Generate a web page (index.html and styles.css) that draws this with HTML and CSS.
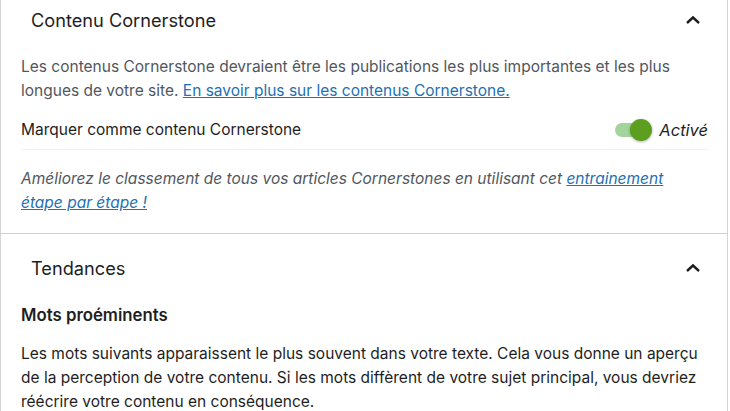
FILE: index.html
```html
<!DOCTYPE html>
<html lang="fr">
<head>
  <meta charset="UTF-8" />
  <title>Cornerstone</title>
  <link rel="stylesheet" href="styles.css">
</head>
<body>
  <div class="panel">
    <section class="box">
      <div class="box-head">
        <h2>Contenu Cornerstone</h2>
        <svg class="chevron" width="16" height="10" viewBox="0 0 16 10"><polyline points="2,8 8,2.5 14,8" fill="none" stroke="#1e1e1e" stroke-width="2.4"/></svg>
      </div>
      <div class="box-body">
        <p class="desc">Les contenus Cornerstone devraient être les publications les plus importantes et les plus longues de votre site. <a href="#">En savoir plus sur les contenus Cornerstone.</a></p>
        <div class="toggle-row">
          <span class="toggle-label">Marquer comme contenu Cornerstone</span>
          <span class="toggle">
            <span class="track"><span class="knob"></span></span>
            <em>Activé</em>
          </span>
        </div>
        <p class="hint">Améliorez le classement de tous vos articles Cornerstones en utilisant cet <a href="#">entrainement étape par étape !</a></p>
      </div>
    </section>

    <section class="box">
      <div class="box-head">
        <h2>Tendances</h2>
        <svg class="chevron" width="16" height="10" viewBox="0 0 16 10"><polyline points="2,8 8,2.5 14,8" fill="none" stroke="#1e1e1e" stroke-width="2.4"/></svg>
      </div>
      <div class="box-body">
        <h3>Mots proéminents</h3>
        <p class="desc dark">Les mots suivants apparaissent le plus souvent dans votre texte. Cela vous donne un aperçu de la perception de votre contenu. Si les mots diffèrent de votre sujet principal, vous devriez réécrire votre contenu en conséquence.</p>
      </div>
    </section>
  </div>
</body>
</html>
```

FILE: styles.css
```css
* {
  box-sizing: border-box;
}

body {
  margin: 0;
  background: #fff;
  font-family: Inter, "Noto Sans", sans-serif;
  font-size: 15.5px;
  line-height: 24px;
  color: #1e1e1e;
  overflow: hidden;
}

.panel {
  width: 728px;
  margin-top: -14px;
  border-left: 1px solid #d4d4d4;
  border-right: 1px solid #d4d4d4;
}

.box {
  border-bottom: 1px solid #d0d0d0;
}

.box-head {
  height: 68px;
  display: flex;
  align-items: center;
  justify-content: space-between;
  padding: 0 26px 0 30px;
}

.box-head h2 {
  margin: 0;
  font-size: 18.2px;
  font-weight: 400;
  color: #1e1e1e;
}

.box-body {
  padding: 1px 19px 18px 20px;
}

.desc {
  margin: 0;
  color: #50575e;
}

.desc.dark {
  color: #1e1e1e;
  margin-top: 15px;
}

a {
  color: #2271b1;
  text-decoration: underline;
}

.toggle-row {
  margin-top: 7px;
  height: 40px;
  display: flex;
  align-items: center;
  justify-content: space-between;
  border-bottom: 1px solid #f0f0f0;
}

.toggle {
  display: flex;
  align-items: center;
  gap: 8px;
}

.track {
  position: relative;
  width: 36px;
  height: 14px;
  border-radius: 7px;
  background: #a4d49d;
}

.knob {
  position: absolute;
  right: -1px;
  top: -4px;
  width: 22px;
  height: 22px;
  border-radius: 50%;
  background: #5c9e1d;
  box-shadow: 0 1px 3px rgba(0, 0, 0, 0.3);
}

.toggle em {
  font-size: 16.5px;
  color: #1e1e1e;
}

.hint {
  margin: 17px 0 0;
  font-style: italic;
  color: #50575e;
}

h3 {
  margin: 0;
  font-size: 16.8px;
  font-weight: 600;
  line-height: 24px;
}
```
